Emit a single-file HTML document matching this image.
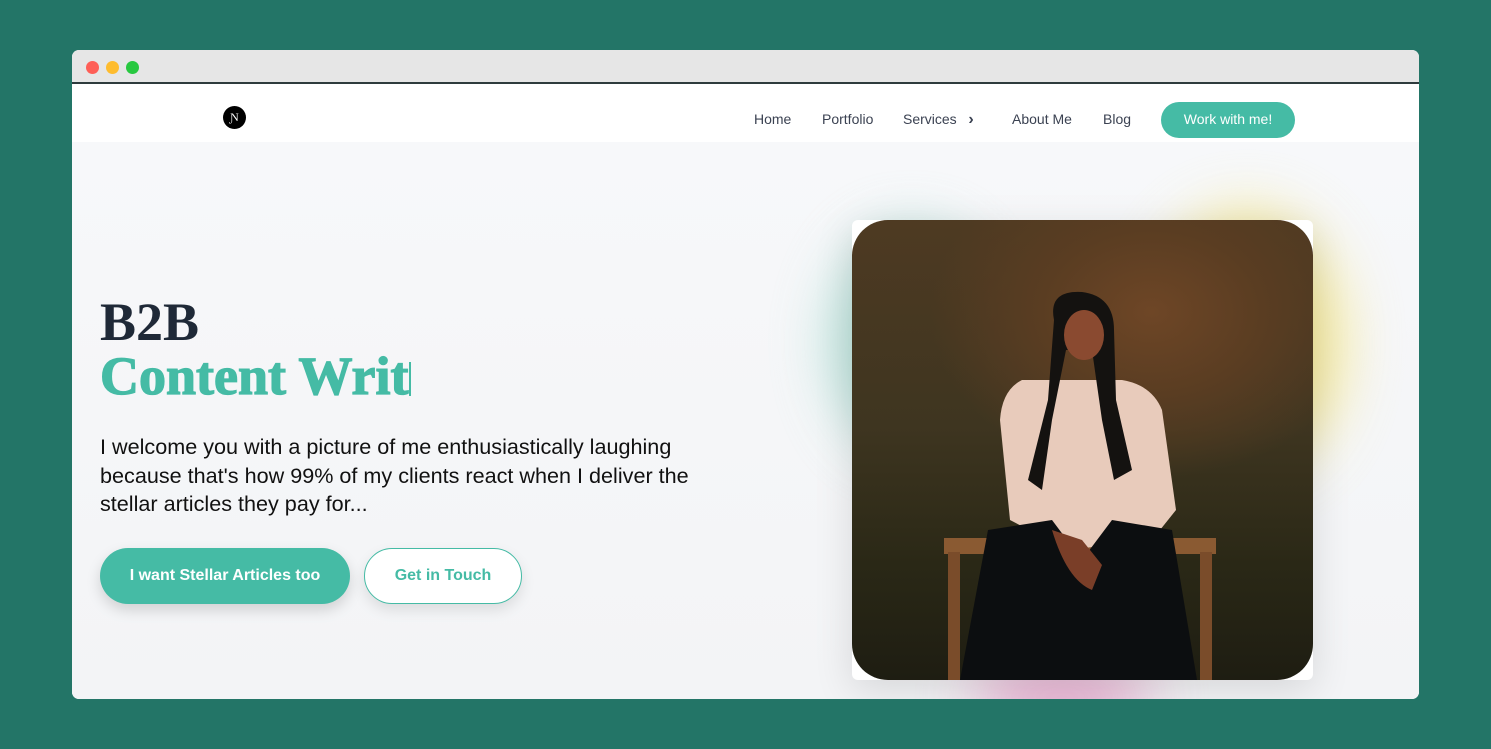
<!DOCTYPE html>
<html><head><meta charset="utf-8">
<style>
*{margin:0;padding:0;box-sizing:border-box}
body{width:1491px;height:749px;background:#237567;font-family:"Liberation Sans",Arial,sans-serif;position:relative;overflow:hidden}
.win{position:absolute;left:72px;top:50px;width:1347px;height:649px;border-radius:7px;overflow:hidden;background:#f5f6f8}
.bar{height:34px;background:#e6e6e6;border-bottom:2px solid #2e3b3d;position:relative}
.dot{position:absolute;top:11px;width:13px;height:13px;border-radius:50%}
.nav{position:absolute;top:34px;left:0;right:0;height:58px;background:#fff}
.logo{position:absolute;left:151px;top:22px;width:23px;height:23px;border-radius:50%;background:#000;color:#fff;font-size:12px;text-align:center;line-height:23px;font-family:"Liberation Serif",serif}
.nav a{position:absolute;top:27px;font-size:14px;color:#3b4252}
.btnw{position:absolute;left:1089px;top:18px;width:134px;height:36px;border-radius:18px;background:#45bba5;color:#fff;font-size:14px;text-align:center;line-height:35px}
.hero{position:absolute;top:92px;left:0;right:0;bottom:0;background:linear-gradient(180deg,#f7f8fa,#f3f4f6)}
.h{position:absolute;left:28px;font-family:"Liberation Serif",serif;font-weight:bold;font-size:54px;line-height:54px;white-space:nowrap}
.cur{display:inline-block;width:2px;height:34px;background:#45bba5;vertical-align:-2px;-webkit-text-stroke:0}
p{position:absolute;left:28px;top:291px;width:610px;font-size:21.6px;line-height:28.5px;color:#111}
.b1{position:absolute;left:28px;top:406px;width:250px;height:56px;border-radius:28px;background:#45bba5;color:#fff;font-weight:bold;font-size:16px;text-align:center;line-height:56px;box-shadow:0 6px 14px rgba(0,0,0,.15)}
.b2{position:absolute;left:292px;top:406px;width:158px;height:56px;border-radius:28px;background:#fff;border:1px solid #45bba5;color:#45bba5;font-weight:bold;font-size:16px;text-align:center;line-height:54px;box-shadow:0 6px 14px rgba(0,0,0,.1)}
.glow{position:absolute;border-radius:50%;filter:blur(30px)}
.card{position:absolute;left:780px;top:78px;width:461px;height:460px;background:#fff;border-radius:6px;box-shadow:0 10px 40px rgba(0,0,0,.12);overflow:hidden}
.img{position:absolute;inset:0;border-radius:36px;overflow:hidden;background:radial-gradient(ellipse 60% 45% at 65% 20%,#6e4626 0%,#5a3d22 40%,transparent 80%),linear-gradient(180deg,#4e3a22 0%,#3e3520 45%,#2a2816 75%,#1e1d12 100%)}
</style></head><body>
<div class="win">
 <div class="bar"><div class="dot" style="left:14px;background:#fe5f57"></div><div class="dot" style="left:34px;background:#febc2e"></div><div class="dot" style="left:54px;background:#28c840"></div></div>
 <div class="hero">
  <div class="glow" style="left:760px;top:90px;width:160px;height:220px;background:#9fd8cc;opacity:.8"></div>
  <div class="glow" style="left:1080px;top:70px;width:190px;height:260px;background:#f3e37a;opacity:.8"></div>
  <div class="glow" style="left:900px;top:520px;width:180px;height:70px;background:#e597c5;opacity:.8"></div>
  <div class="h" style="top:153px;color:#1f2937"><b>B2B</b></div>
  <div class="h" style="top:207px;color:#45bba5"><b style="-webkit-text-stroke:1.3px #45bba5">Content Writ</b><span class="cur"></span></div>
  <p>I welcome you with a picture of me enthusiastically laughing because that's how 99% of my clients react when I deliver the stellar articles they pay for...</p>
  <div class="b1">I want Stellar Articles too</div>
  <div class="b2">Get in Touch</div>
  <div class="card"><div class="img">
   <svg width="461" height="460" viewBox="0 0 461 460" style="position:absolute;left:0;top:0">
    <rect x="92" y="318" width="272" height="16" fill="#8a5a32"/>
    <rect x="96" y="332" width="12" height="128" fill="#7a4c2a"/>
    <rect x="348" y="332" width="12" height="128" fill="#7a4c2a"/>
    <path d="M170 160 Q150 170 148 200 L158 300 L215 330 L300 320 L324 290 L310 190 Q300 165 270 160 Z" fill="#e8cbbb"/>
    <path d="M108 460 L136 310 L200 300 L230 340 L260 300 L320 310 L345 460 Z" fill="#0c0e10"/>
    <path d="M202 100 Q196 70 230 72 Q262 76 262 110 L264 180 L280 250 L262 260 L250 200 L240 130 L214 130 L200 200 L190 270 L176 260 L196 180 Z" fill="#141210"/>
    <ellipse cx="232" cy="115" rx="20" ry="25" fill="#8a4a30"/>
    <path d="M200 310 Q215 360 240 370 L250 345 L230 320 Z" fill="#7a3e28"/>
   </svg>
  </div></div>
 </div>
 <div class="nav">
  <div class="logo">Ɲ</div>
  <a style="left:682px">Home</a>
  <a style="left:750px">Portfolio</a>
  <a style="left:831px">Services&nbsp;&nbsp;&nbsp;<b style="font-size:16px">›</b></a>
  <a style="left:940px">About Me</a>
  <a style="left:1031px">Blog</a>
  <div class="btnw">Work with me!</div>
 </div>
</div>
</body></html>
